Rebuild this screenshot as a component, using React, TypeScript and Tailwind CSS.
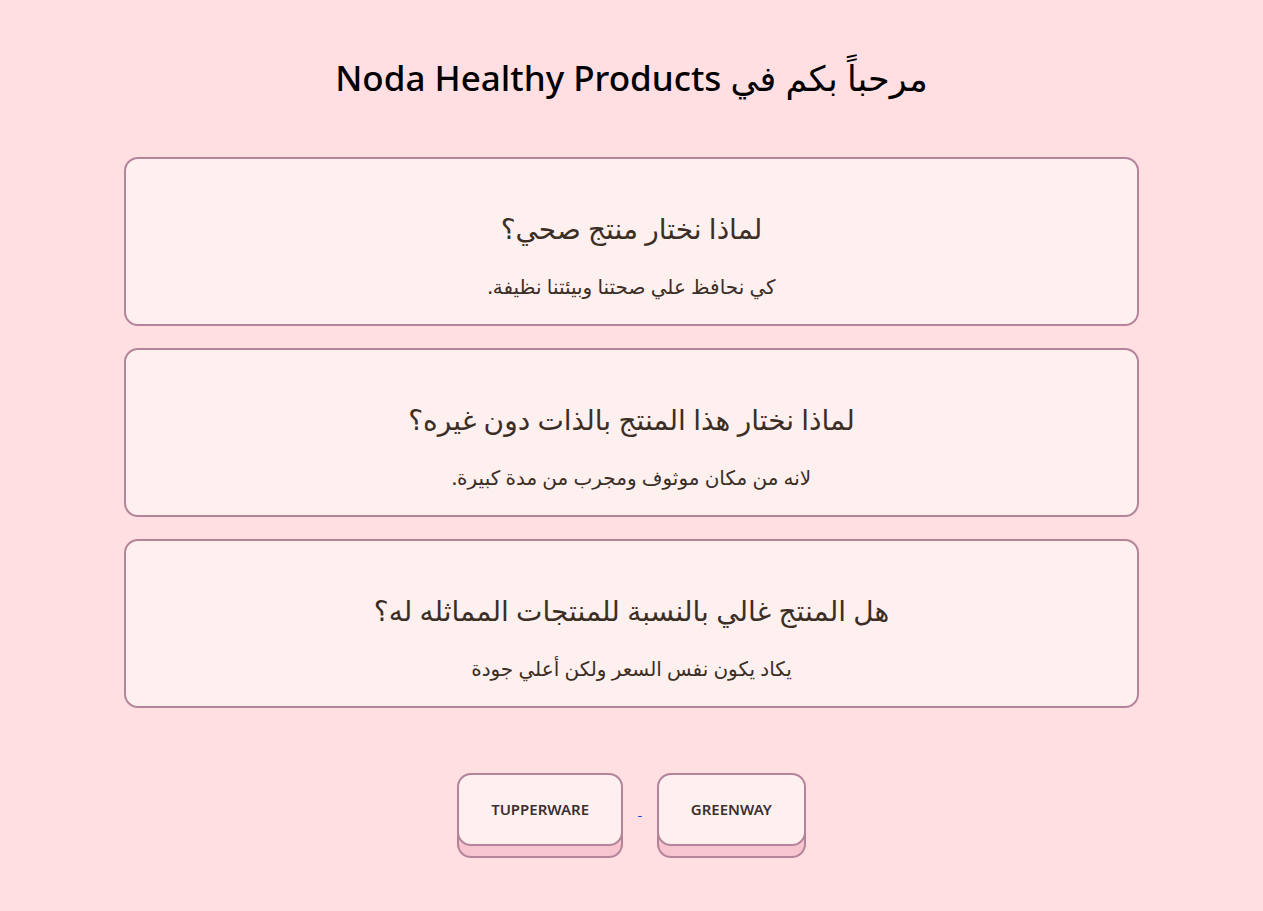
const faqs = [
  { q: "لماذا نختار منتج صحي؟", a: "كي نحافظ علي صحتنا وبيئتنا نظيفة." },
  { q: "لماذا نختار هذا المنتج بالذات دون غيره؟", a: "لانه من مكان موثوف ومجرب من مدة كبيرة." },
  { q: "هل المنتج غالي بالنسبة للمنتجات المماثله له؟", a: "يكاد يكون نفس السعر ولكن أعلي جودة" },
];

function BrandButton({ label }: { label: string }) {
  return (
    <a
      href="#"
      className="flex h-[73px] items-center justify-center rounded-[14px] border-2 border-[#b5849a] bg-[#fff0f0] px-[32px] text-[15px] font-semibold text-[#3b3030] no-underline shadow-[0_12px_0_-2px_#f7c5d0,0_12px_0_0_#b5849a]"
    >
      {label}
    </a>
  );
}

export default function App() {
  return (
    <div
      dir="rtl"
      className="min-h-[911px] bg-[#ffdfe2] pt-[52px] text-center"
      style={{ fontFamily: '"Noto Sans", "DejaVu Sans", sans-serif' }}
    >
      <h1 className="text-[35px] font-medium leading-[52px] text-black">مرحباً بكم في Noda Healthy Products</h1>

      <div className="mx-auto mt-[53px] flex w-[1015px] flex-col gap-[22px]">
        {faqs.map((f) => (
          <div
            key={f.q}
            className="flex h-[169px] flex-col items-center rounded-[14px] border-2 border-[#b5849a] bg-[#fff0f0] pt-[49px]"
          >
            <h2 className="text-[28px] font-medium leading-[40px] text-[#3b2e25]">{f.q}</h2>
            <p className="mt-[25px] text-[20px] leading-[28px] text-[#3b2e25]">{f.a}</p>
          </div>
        ))}
      </div>

      <div className="mt-[65px] flex items-center justify-center gap-[15px]" dir="ltr">
        <BrandButton label="TUPPERWARE" />
        <a href="#" className="text-[14px] leading-[20px] text-blue-700 underline">
          &nbsp;
        </a>
        <BrandButton label="GREENWAY" />
      </div>
    </div>
  );
}
